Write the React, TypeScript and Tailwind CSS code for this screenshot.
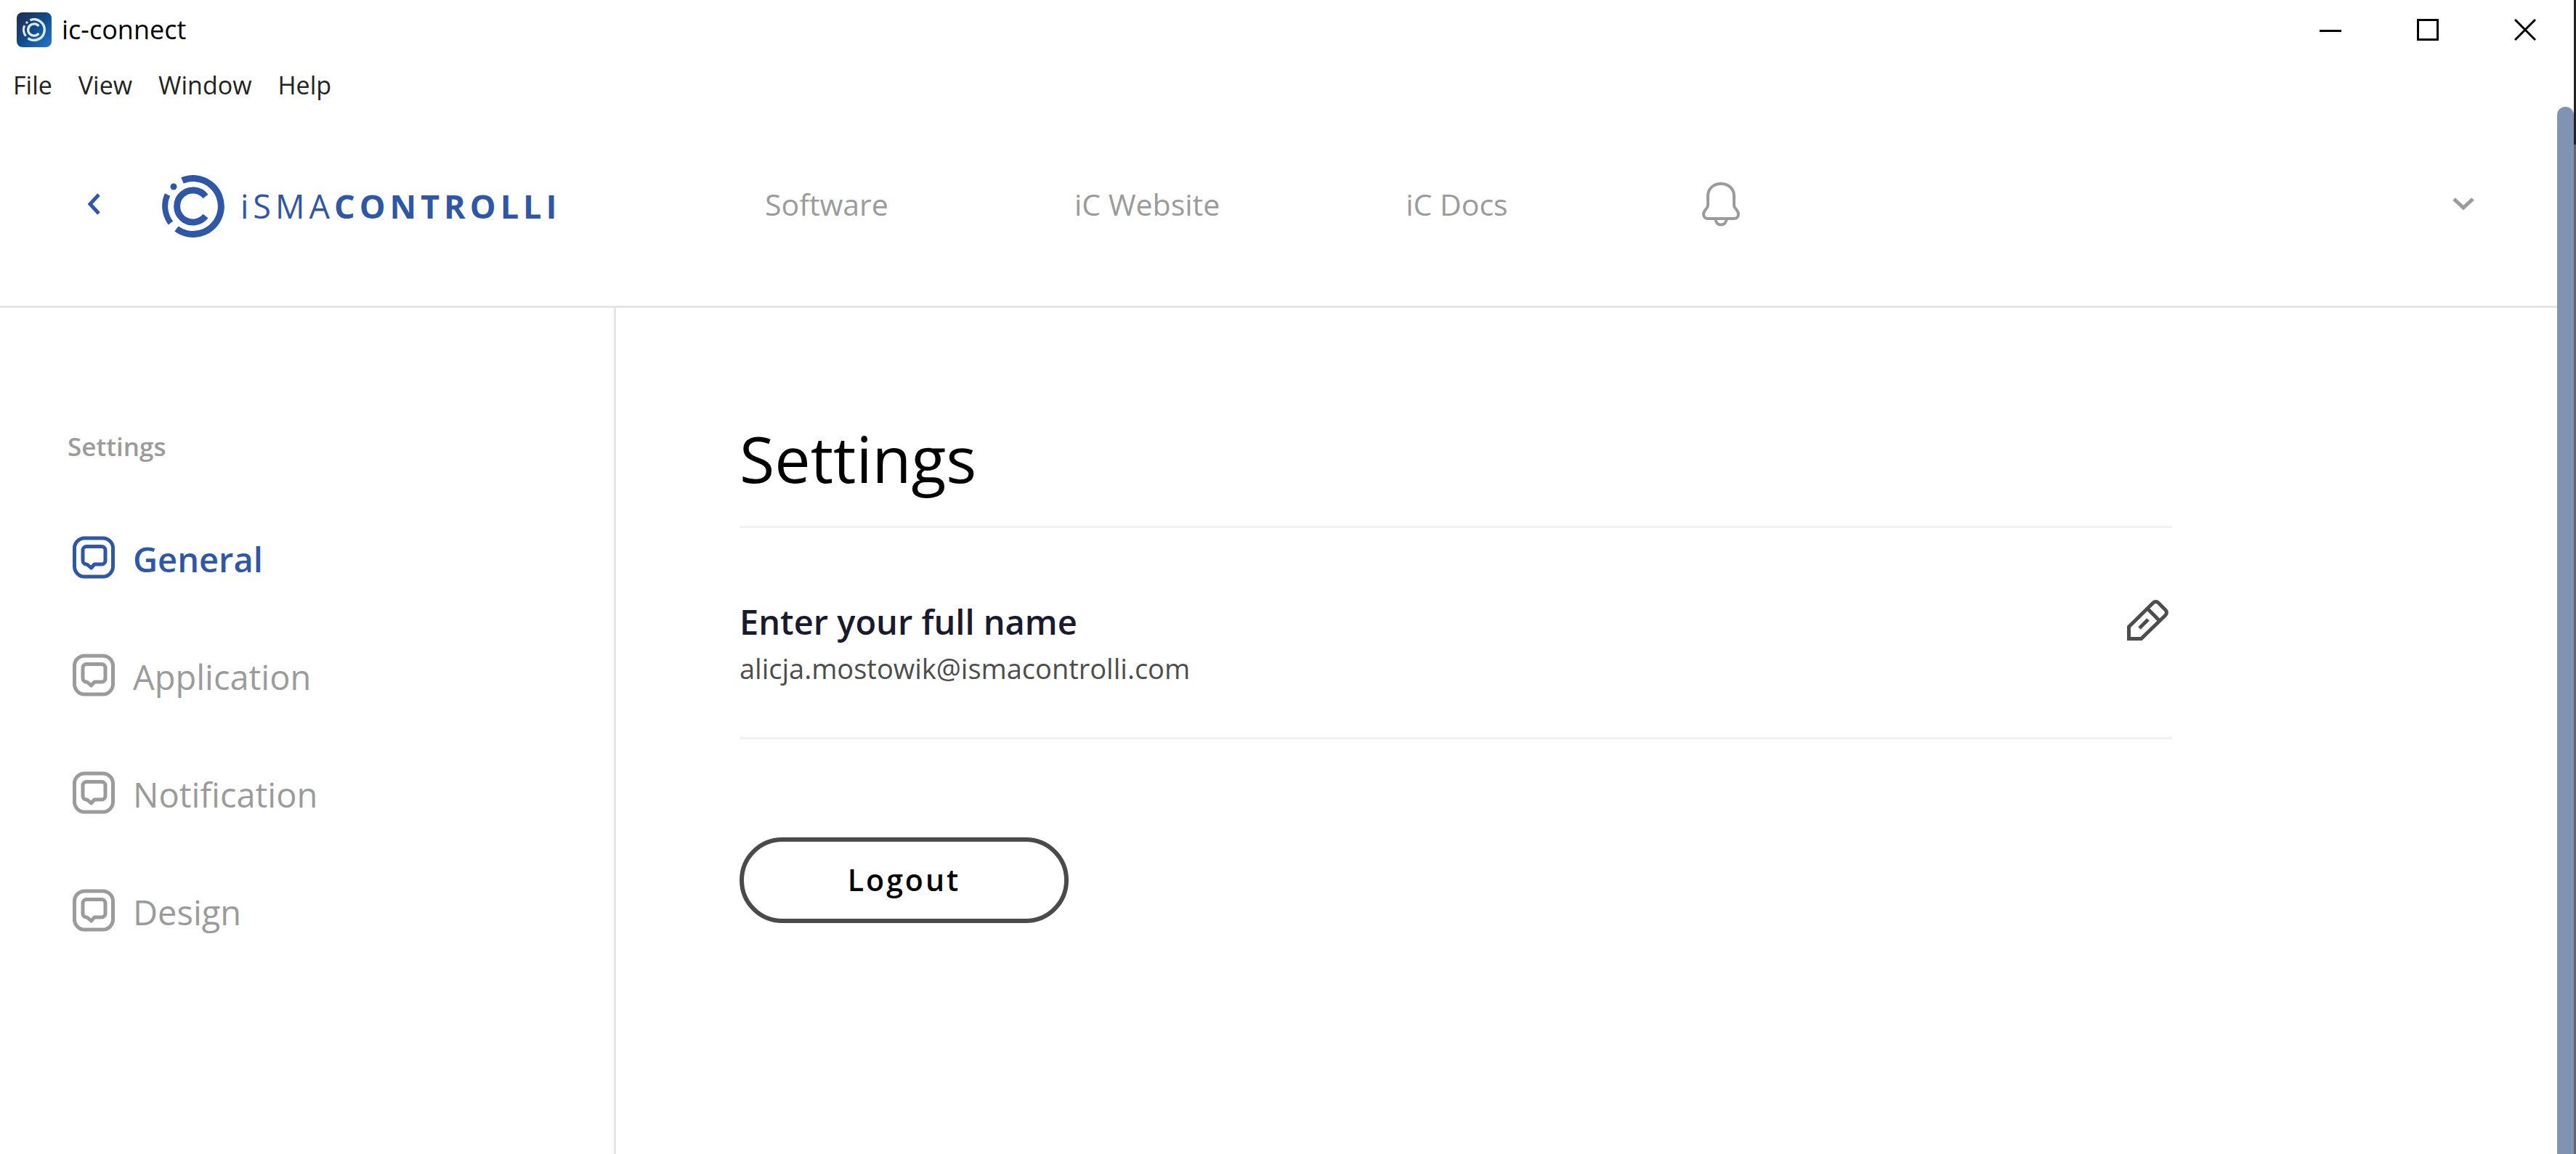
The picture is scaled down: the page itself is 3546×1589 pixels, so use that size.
import { useState } from "react";
import clsx from "clsx";

const MENU = ["File", "View", "Window", "Help"];
const LINKS = ["Software", "iC Website", "iC Docs"];
const SECTIONS = ["General", "Application", "Notification", "Design"];

function LogoMark({ className }: { className?: string }) {
  return (
    <svg viewBox="0 0 86 86" fill="none" stroke="currentColor" className={className} aria-hidden="true">
      <path d="M28 7.5A38.5 38.5 0 1 1 20 74" strokeWidth="9" />
      <path d="M7.5 27A38.5 38.5 0 0 0 12 66" strokeWidth="8" />
      <path d="M60 29.5A22 22 0 1 0 60 56.500" strokeWidth="9" />
      <circle cx="16" cy="16" r="4.500" fill="currentColor" stroke="none" />
    </svg>
  );
}

function AppIcon() {
  return (
    <span className="flex size-12 items-center justify-center rounded-lg bg-linear-to-br from-[#1c2a50] via-[#0f4c8c] to-[#2478cc] text-[#dfe9f3]">
      <LogoMark className="size-8" />
    </span>
  );
}

function ChatIcon() {
  return (
    <svg viewBox="0 0 60 60" fill="none" stroke="currentColor" strokeWidth="5" className="size-[60px] shrink-0" aria-hidden="true">
      <rect x="3.5" y="3" width="53" height="53" rx="14" />
      <path
        strokeLinejoin="round"
        d="M20 14.500h21a5 5 0 0 1 5 5v14.500a5 5 0 0 1-5 5h-10l-4.500 5-4.500-4-2-1a5 5 0 0 1-5-5v-14.500a5 5 0 0 1 5-5z"
      />
    </svg>
  );
}

function BellIcon() {
  return (
    <svg viewBox="0 0 54 62" fill="none" stroke="currentColor" strokeWidth="4" className="h-[62px] w-[54px]" aria-hidden="true">
      <path d="M27 3C15.500 3 9 11 9 20v13c0 4-6 6-6 12 0 3.500 2.500 6 6 6h36c3.500 0 6-2.500 6-6 0-6-6-8-6-12V20C45 11 38.500 3 27 3z" />
      <path d="M19.500 51c0 5 3 8.500 7.500 8.500s7.500-3.500 7.500-8.500" />
    </svg>
  );
}

function PencilIcon() {
  return (
    <svg viewBox="0 0 60 60" fill="none" stroke="currentColor" strokeWidth="5" className="size-[60px]" aria-hidden="true">
      <path d="M4.500 56.500V40L38 7a5 5 0 0 1 7 0l10 10a5 5 0 0 1 0 7L21.500 56.500z" />
      <path d="M30 15l17 17M19 42l12-12" />
    </svg>
  );
}

function WindowBar() {
  return (
    <div className="flex h-[83px] items-start justify-between pl-[23px]">
      <div className="flex items-center gap-[14px] pt-[17px]">
        <AppIcon />
        <span className="text-[36px] leading-[48px] text-black">ic-connect</span>
      </div>
      <div className="flex text-black">
        <button type="button" aria-label="Minimize" className="flex h-[82px] w-[134px] items-center justify-center">
          <svg viewBox="0 0 30 30" className="size-[30px]" stroke="currentColor" strokeWidth="3">
            <path d="M0 16.500h30" />
          </svg>
        </button>
        <button type="button" aria-label="Maximize" className="flex h-[82px] w-[134px] items-center justify-center">
          <svg viewBox="0 0 30 30" className="size-[30px]" fill="none" stroke="currentColor" strokeWidth="3">
            <rect x="1.500" y="1.500" width="27" height="27" />
          </svg>
        </button>
        <button type="button" aria-label="Close" className="flex h-[82px] w-[134px] items-center justify-center">
          <svg viewBox="0 0 30 30" className="size-[30px]" stroke="currentColor" strokeWidth="3">
            <path d="M1 1l28 28M29 1L1 29" />
          </svg>
        </button>
      </div>
    </div>
  );
}

function MenuBar() {
  return (
    <div className="flex h-16 items-end gap-9 pb-[6px] pl-[18px] text-[34px] leading-[48px] text-[#222]">
      {MENU.map((item) => (
        <button key={item} type="button">
          {item}
        </button>
      ))}
    </div>
  );
}

function Header() {
  return (
    <header className="flex h-[277px] items-center border-b-[3px] border-[#e6e6e6] pb-[6px] pl-[120px] pr-[114px] text-[#9b9b9b]">
      <button type="button" aria-label="Back" className="mr-[85px] text-[#2f57a7]">
        <svg viewBox="0 0 18 30" className="h-[30px] w-[18px]" fill="none" stroke="currentColor" strokeWidth="5">
          <path d="M16 2L4 15l12 13" />
        </svg>
      </button>
      <a href="#" className="flex items-center gap-[22px] pt-[6px] text-[#2f57a7]">
        <LogoMark className="size-[86px]" />
        <span className="w-[442px] text-[45px] leading-[64px] tracking-[6px] whitespace-nowrap">
          iSMA<b>CONTROLLI</b>
        </span>
      </a>
      <nav className="ml-[280px] flex items-center gap-64 text-[41px] leading-[64px]">
        {LINKS.map((link) => (
          <a key={link} href="#">
            {link}
          </a>
        ))}
        <button type="button" aria-label="Notifications" className="pl-[10px]">
          <BellIcon />
        </button>
      </nav>
      <button type="button" aria-label="Account" className="ml-auto">
        <svg viewBox="0 0 30 18" className="h-[18px] w-[30px]" fill="none" stroke="currentColor" strokeWidth="5">
          <path d="M2 2l13 12L28 2" />
        </svg>
      </button>
    </header>
  );
}

function Sidebar({ active, onSelect }: { active: string; onSelect: (name: string) => void }) {
  return (
    <aside className="w-[848px] shrink-0 border-r-[3px] border-[#e6e6e6] pl-[93px] pt-[164px] text-[#9b9b9b]">
      <h2 className="text-[35px] font-semibold leading-[54px]">Settings</h2>
      <ul className="mt-[72px] pl-[6px]">
        {SECTIONS.map((name) => (
          <li key={name} className="h-[162px]">
            <button
              type="button"
              onClick={() => onSelect(name)}
              className={clsx(
                "flex h-[108px] items-center gap-6 text-[47px] leading-[72px]",
                name === active && "font-semibold text-[#2f57a7]",
              )}
            >
              <ChatIcon />
              <span className="pt-1">{name}</span>
            </button>
          </li>
        ))}
      </ul>
    </aside>
  );
}

function SettingsPanel() {
  return (
    <main className="flex-1 pl-[170px] pr-[530px] pt-[147px]">
      <h1 className="border-b-[3px] border-[#f0f0f5] pb-[33px] text-[88px] leading-[120px] text-black">Settings</h1>
      <div className="flex items-start justify-between border-b-[3px] border-[#f0f0f5] pb-[63px] pt-[96px]">
        <div>
          <h3 className="text-[47px] font-semibold leading-[66px] text-[#1a1a2e]">Enter your full name</h3>
          <p className="text-[38px] leading-[63px] text-[#4d4d4d]">alicja.mostowik@ismacontrolli.com</p>
        </div>
        <button type="button" aria-label="Edit name" className="mr-1 text-[#4d4d4d]">
          <PencilIcon />
        </button>
      </div>
      <button
        type="button"
        className="mt-[135px] h-[118px] w-[453px] rounded-full border-[6px] border-[#4a4a4a] text-[41px] font-semibold tracking-[3px] text-black"
      >
        Logout
      </button>
    </main>
  );
}

export default function App() {
  const [active, setActive] = useState("General");

  return (
    <div className="flex min-h-screen bg-white font-['Open_Sans',sans-serif]">
      <div className="flex flex-1 flex-col">
        <WindowBar />
        <MenuBar />
        <div className="flex flex-1">
          <div className="flex flex-1 flex-col">
            <Header />
            <div className="flex flex-1">
              <Sidebar active={active} onSelect={setActive} />
              <SettingsPanel />
            </div>
          </div>
          {/* Scroll thumb */}
          <div className="w-[23px] rounded-t-full bg-[#8193b2]" />
        </div>
      </div>
      {/* Window edge */}
      <div className="flex w-[3px] flex-col">
        <div className="h-[199px] bg-[#222]" />
        <div className="flex-1 bg-[#666]" />
      </div>
    </div>
  );
}
